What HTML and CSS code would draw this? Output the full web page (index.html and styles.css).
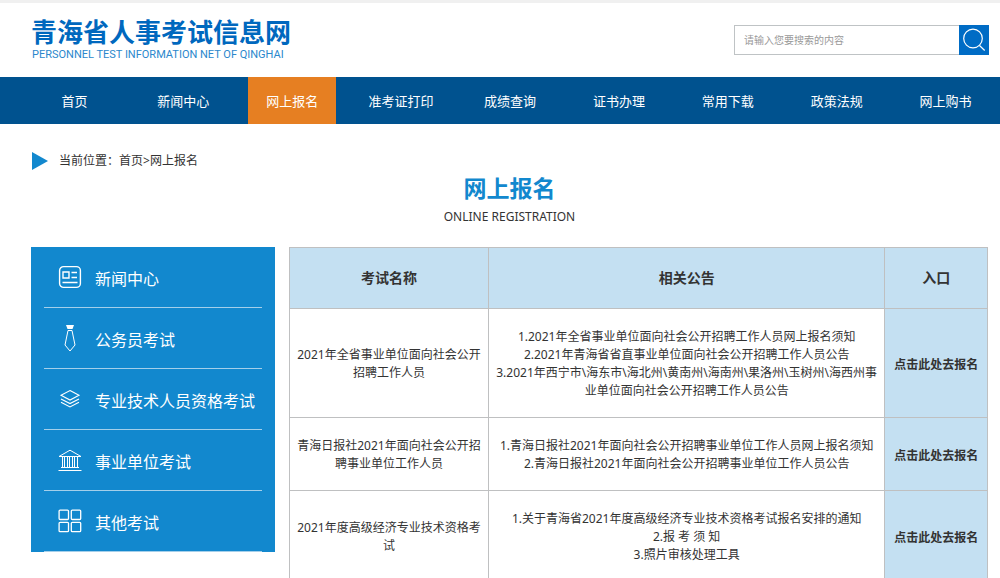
FILE: index.html
```html
<!DOCTYPE html>
<html lang="zh-CN">
<head>
<meta charset="utf-8">
<meta name="viewport" content="width=device-width, initial-scale=1">
<title>网上报名 - 青海省人事考试信息网</title>
<link rel="stylesheet" href="styles.css">
</head>
<body>
<header class="header">
  <div class="brand">
    <div class="brand-name">青海省人事考试信息网</div>
    <div class="brand-sub">PERSONNEL TEST INFORMATION NET OF QINGHAI</div>
  </div>
  <form class="search">
    <input class="search-input" type="text" placeholder="请输入您要搜索的内容" aria-label="搜索">
    <button class="search-button" type="button" aria-label="搜索">
      <svg viewBox="0 0 30 30" width="30" height="30" fill="none" stroke="#fff" stroke-width="1.2"><circle cx="14" cy="13.5" r="9.3"/><path d="M20.5 20.5l5.2 5"/></svg>
    </button>
  </form>
</header>
<nav class="nav">
  <div class="nav-cell"><a class="nav-link" href="#">首页</a></div>
  <div class="nav-cell"><a class="nav-link" href="#">新闻中心</a></div>
  <div class="nav-cell"><a class="nav-link nav-link-active" href="#">网上报名</a></div>
  <div class="nav-cell"><a class="nav-link" href="#">准考证打印</a></div>
  <div class="nav-cell"><a class="nav-link" href="#">成绩查询</a></div>
  <div class="nav-cell"><a class="nav-link" href="#">证书办理</a></div>
  <div class="nav-cell"><a class="nav-link" href="#">常用下载</a></div>
  <div class="nav-cell"><a class="nav-link" href="#">政策法规</a></div>
  <div class="nav-cell"><a class="nav-link" href="#">网上购书</a></div>
</nav>
<main class="main">
  <div class="crumbs">
    <svg viewBox="0 0 17 18" width="17" height="18"><path d="M1 0l16 9-16 9z" fill="#1288ce"/></svg>
    <span>当前位置：<a href="#">首页</a>&gt;<a href="#">网上报名</a></span>
  </div>
  <h1 class="title">网上报名</h1>
  <p class="subtitle">ONLINE REGISTRATION</p>
  <div class="columns">
    <aside class="side">
      <a class="side-link" href="#">
        <svg class="side-icon" viewBox="0 0 24 28" fill="none" stroke="#fff" stroke-width="1.4"><rect x="1.6" y="3.6" width="20.8" height="20.8" rx="4"/><path d="M5 9h6v6H5zM13.5 9.5H19M13.5 14.5H19M4.5 19.5h15"/></svg>
        <span class="side-text">新闻中心</span></a>
      <a class="side-link" href="#">
        <svg class="side-icon" viewBox="0 0 24 28" fill="none" stroke="#fff" stroke-width="1"><path d="M8 1h8l-1.5 4h-5z" fill="#fff" stroke="none"/><path d="M10 6.5h4L17 21l-5 6-5-6z"/></svg>
        <span class="side-text">公务员考试</span></a>
      <a class="side-link" href="#">
        <svg class="side-icon" viewBox="0 0 24 28" fill="none" stroke="#fff" stroke-width="1.1"><path d="M12 5.5l9 4.8-9 4.8-9-4.8zM3 14l9 4.6 9-4.6M3 17.3l9 4.6 9-4.6"/></svg>
        <span class="side-text">专业技术人员资格考试</span></a>
      <a class="side-link" href="#">
        <svg class="side-icon" viewBox="0 0 24 28" fill="none" stroke="#fff" stroke-width="1"><path d="M1 10.5L12 4.2l11 6.3zM3 21.5h18M.5 24.5h23M4.5 11v10M6.5 11v10M9.5 11v10M11.5 11v10M14.5 11v10M16.5 11v10M19.5 11v10"/></svg>
        <span class="side-text">事业单位考试</span></a>
      <a class="side-link" href="#">
        <svg class="side-icon" viewBox="0 0 24 28" fill="none" stroke="#fff" stroke-width="1.3"><rect x="1.1" y="3.1" width="9.4" height="9.4" rx="1"/><rect x="13.3" y="3.1" width="9.4" height="9.4" rx="1"/><rect x="1.1" y="15.3" width="9.4" height="9.4" rx="1"/><rect x="13.3" y="15.3" width="9.4" height="9.4" rx="1"/></svg>
        <span class="side-text">其他考试</span></a>
    </aside>
    <table class="exams">
      <thead>
        <tr><th class="col-name">考试名称</th><th class="col-notice">相关公告</th><th class="col-entry">入口</th></tr>
      </thead>
      <tbody>
        <tr>
          <td>2021年全省事业单位面向社会公开招聘工作人员</td>
          <td><a href="#">1.2021年全省事业单位面向社会公开招聘工作人员网上报名须知</a><br><a href="#">2.2021年青海省省直事业单位面向社会公开招聘工作人员公告</a><br><a href="#">3.2021年西宁市\海东市\海北州\黄南州\海南州\果洛州\玉树州\海西州事业单位面向社会公开招聘工作人员公告</a></td>
          <td class="entry"><a href="#">点击此处去报名</a></td>
        </tr>
        <tr>
          <td>青海日报社2021年面向社会公开招聘事业单位工作人员</td>
          <td><a href="#">1.青海日报社2021年面向社会公开招聘事业单位工作人员网上报名须知</a><br><a href="#">2.青海日报社2021年面向社会公开招聘事业单位工作人员公告</a></td>
          <td class="entry"><a href="#">点击此处去报名</a></td>
        </tr>
        <tr>
          <td>2021年度高级经济专业技术资格考试</td>
          <td><a href="#">1.关于青海省2021年度高级经济专业技术资格考试报名安排的通知</a><br><a href="#">2.报 考 须 知</a><br><a href="#">3.照片审核处理工具</a></td>
          <td class="entry"><a href="#">点击此处去报名</a></td>
        </tr>
      </tbody>
    </table>
  </div>
</main>
</body>
</html>
```

FILE: styles.css
```css
* {
  box-sizing: border-box;
}

body {
  margin: 0;
  border-top: 3px solid #f0f0f0;
  background: #fff;
  color: #333;
  font: 12px/18px "Noto Sans", "Noto Sans CJK SC", sans-serif;
  overflow: hidden;
}

a {
  color: inherit;
  text-decoration: none;
}

.header {
  display: flex;
  justify-content: space-between;
  align-items: center;
  height: 74px;
  padding: 0 11px 0 31px;
}

.brand {
  padding-bottom: 2px;
}

.brand-name {
  color: #0068be;
  font-size: 26px;
  font-weight: 700;
  line-height: 32px;
}

.brand-sub {
  padding-left: 1px;
  color: #2b87cc;
  font: 11px/14px Roboto, Arial, sans-serif;
}

.search {
  display: flex;
  width: 255px;
  height: 30px;
}

.search-input {
  flex: 1;
  min-width: 0;
  padding: 0 9px;
  border: 1px solid #bfc3c5;
  border-right: 0;
  border-radius: 0;
  font: 10px/18px "Noto Sans", "Noto Sans CJK SC", sans-serif;
}

.search-input::placeholder {
  color: #999;
}

.search-button {
  width: 30px;
  padding: 0;
  border: 0;
  background: #006cc5;
}

.search-button svg {
  display: block;
}

.nav {
  display: flex;
  padding-left: 20px;
  background: #00528f;
}

.nav-cell {
  display: flex;
  flex: 1;
  justify-content: center;
}

.nav-link {
  padding: 1px 18px 0;
  color: #fff;
  font-size: 13px;
  line-height: 46px;
  white-space: nowrap;
}

.nav-link-active {
  background: #e67f22;
}

.main {
  padding: 28px 12px 0 31px;
}

.crumbs {
  display: flex;
  align-items: center;
  gap: 11px;
}

.title {
  margin: 2px 0 0;
  color: #1288ce;
  font-size: 23px;
  font-weight: 700;
  line-height: 32px;
  text-align: center;
}

.subtitle {
  margin: 4px 0 21px;
  text-align: center;
}

.columns {
  display: grid;
  grid-template-columns: 244px 1fr;
  align-items: start;
  gap: 14px;
}

.side {
  padding: 0 13px;
  background: #1288ce;
}

.side-link {
  display: flex;
  align-items: center;
  gap: 13px;
  height: 61px;
  padding-left: 14px;
  border-bottom: 1px solid #a4cfea;
  color: #fff;
  font-size: 16px;
  white-space: nowrap;
}

.side-icon {
  width: 24px;
  height: 28px;
}

.side-text {
  padding-top: 4px;
}

.exams {
  width: 100%;
  border-collapse: collapse;
  table-layout: fixed;
  text-align: center;
}

.exams th,
.exams td {
  border: 1px solid #bfc0c1;
}

.exams th {
  padding: 21px 0;
  background: #c4e0f2;
  font-size: 14px;
}

.exams td {
  padding: 19px 4px 17px;
}

.exams .entry {
  padding: 20px 4px 16px;
  background: #c4e0f2;
  font-weight: 700;
}

.col-name {
  width: 28.5%;
}

.col-notice {
  width: 56.8%;
}

.col-entry {
  width: 14.7%;
}
```
